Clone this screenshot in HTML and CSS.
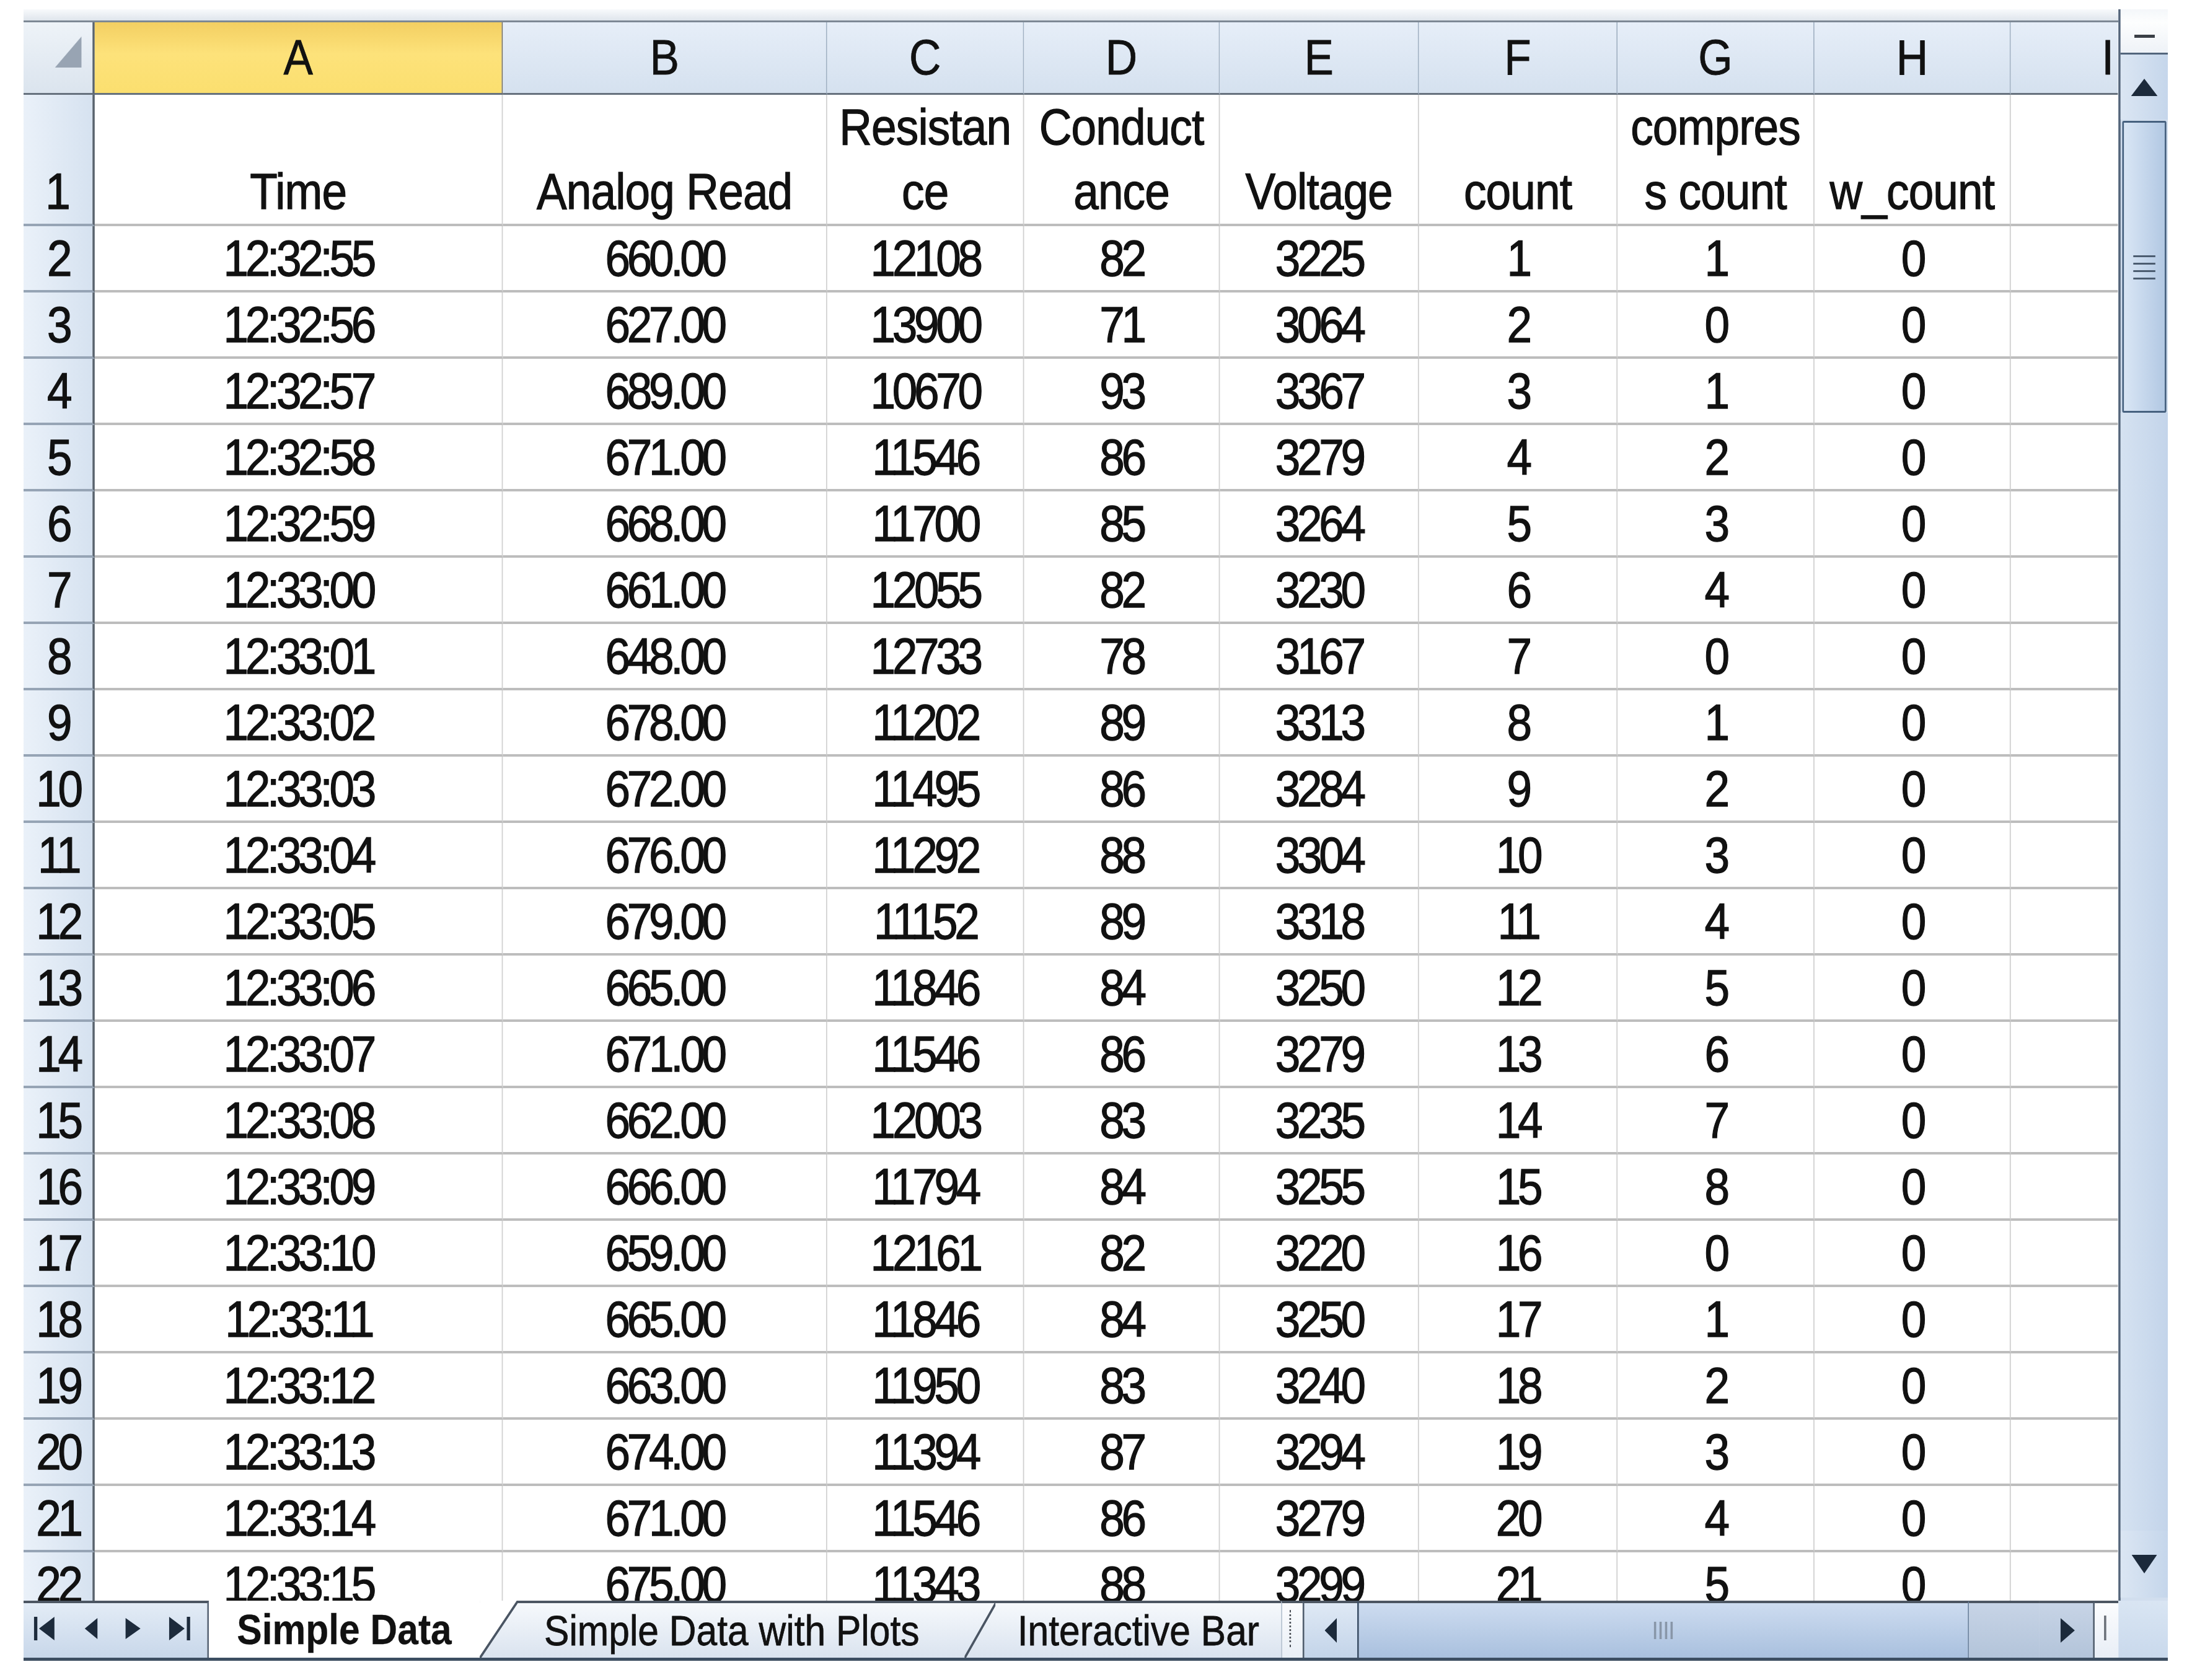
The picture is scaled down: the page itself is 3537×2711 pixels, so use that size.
FILE: index.html
```html
<!DOCTYPE html>
<html lang="en">
<head>
    <meta charset="UTF-8">
    <meta name="viewport" content="width=device-width, initial-scale=1.0">
    <title>Simple Data</title>
    <link rel="stylesheet" href="styles.css">
</head>
<body>
  <div class="frame">
    <div class="window">
        <div class="main">
            <div class="sheet">
                <div class="topstrip"></div>
                <div class="grid-wrap">
                    <table class="grid">
                        <colgroup>
                            <col class="c-row"><col class="c-a"><col class="c-b"><col class="c-c"><col class="c-d">
                            <col class="c-e"><col class="c-f"><col class="c-g"><col class="c-h"><col class="c-i">
                        </colgroup>
                        <thead>
                            <tr class="colhead">
                                <th class="corner"><span class="tri"></span></th>
                                <th class="sel">A</th><th>B</th><th>C</th><th>D</th><th>E</th>
                                <th>F</th><th>G</th><th>H</th><th class="cut">I</th>
                            </tr>
                        </thead>
                        <tbody>
                            <tr class="r-title">
                                <th>1</th><td>Time</td><td>Analog Read</td><td>Resistan<br>ce</td><td>Conduct<br>ance</td>
                                <td>Voltage</td><td>count</td><td>compres<br>s count</td><td>w_count</td><td></td>
                            </tr>
                            <tr><th>2</th><td>12:32:55</td><td>660.00</td><td>12108</td><td>82</td><td>3225</td><td>1</td><td>1</td><td>0</td><td></td></tr>
                            <tr><th>3</th><td>12:32:56</td><td>627.00</td><td>13900</td><td>71</td><td>3064</td><td>2</td><td>0</td><td>0</td><td></td></tr>
                            <tr><th>4</th><td>12:32:57</td><td>689.00</td><td>10670</td><td>93</td><td>3367</td><td>3</td><td>1</td><td>0</td><td></td></tr>
                            <tr><th>5</th><td>12:32:58</td><td>671.00</td><td>11546</td><td>86</td><td>3279</td><td>4</td><td>2</td><td>0</td><td></td></tr>
                            <tr><th>6</th><td>12:32:59</td><td>668.00</td><td>11700</td><td>85</td><td>3264</td><td>5</td><td>3</td><td>0</td><td></td></tr>
                            <tr><th>7</th><td>12:33:00</td><td>661.00</td><td>12055</td><td>82</td><td>3230</td><td>6</td><td>4</td><td>0</td><td></td></tr>
                            <tr><th>8</th><td>12:33:01</td><td>648.00</td><td>12733</td><td>78</td><td>3167</td><td>7</td><td>0</td><td>0</td><td></td></tr>
                            <tr><th>9</th><td>12:33:02</td><td>678.00</td><td>11202</td><td>89</td><td>3313</td><td>8</td><td>1</td><td>0</td><td></td></tr>
                            <tr><th>10</th><td>12:33:03</td><td>672.00</td><td>11495</td><td>86</td><td>3284</td><td>9</td><td>2</td><td>0</td><td></td></tr>
                            <tr><th>11</th><td>12:33:04</td><td>676.00</td><td>11292</td><td>88</td><td>3304</td><td>10</td><td>3</td><td>0</td><td></td></tr>
                            <tr><th>12</th><td>12:33:05</td><td>679.00</td><td>11152</td><td>89</td><td>3318</td><td>11</td><td>4</td><td>0</td><td></td></tr>
                            <tr><th>13</th><td>12:33:06</td><td>665.00</td><td>11846</td><td>84</td><td>3250</td><td>12</td><td>5</td><td>0</td><td></td></tr>
                            <tr><th>14</th><td>12:33:07</td><td>671.00</td><td>11546</td><td>86</td><td>3279</td><td>13</td><td>6</td><td>0</td><td></td></tr>
                            <tr><th>15</th><td>12:33:08</td><td>662.00</td><td>12003</td><td>83</td><td>3235</td><td>14</td><td>7</td><td>0</td><td></td></tr>
                            <tr><th>16</th><td>12:33:09</td><td>666.00</td><td>11794</td><td>84</td><td>3255</td><td>15</td><td>8</td><td>0</td><td></td></tr>
                            <tr><th>17</th><td>12:33:10</td><td>659.00</td><td>12161</td><td>82</td><td>3220</td><td>16</td><td>0</td><td>0</td><td></td></tr>
                            <tr><th>18</th><td>12:33:11</td><td>665.00</td><td>11846</td><td>84</td><td>3250</td><td>17</td><td>1</td><td>0</td><td></td></tr>
                            <tr><th>19</th><td>12:33:12</td><td>663.00</td><td>11950</td><td>83</td><td>3240</td><td>18</td><td>2</td><td>0</td><td></td></tr>
                            <tr><th>20</th><td>12:33:13</td><td>674.00</td><td>11394</td><td>87</td><td>3294</td><td>19</td><td>3</td><td>0</td><td></td></tr>
                            <tr><th>21</th><td>12:33:14</td><td>671.00</td><td>11546</td><td>86</td><td>3279</td><td>20</td><td>4</td><td>0</td><td></td></tr>
                            <tr><th>22</th><td>12:33:15</td><td>675.00</td><td>11343</td><td>88</td><td>3299</td><td>21</td><td>5</td><td>0</td><td></td></tr>
                        </tbody>
                    </table>
                </div>
            </div>
            <div class="vscroll">
                <div class="vs-split"><span class="dash"></span></div>
                <div class="vs-btn vs-up">
                    <svg width="48" height="28" viewBox="0 0 48 28"><polygon points="24,0 48,28 0,28"/></svg>
                </div>
                <div class="vs-thumb">
                    <span class="grip"></span><span class="grip"></span><span class="grip"></span><span class="grip"></span>
                </div>
                <div class="vs-track"></div>
                <div class="vs-btn vs-down">
                    <svg width="46" height="30" viewBox="0 0 46 30"><polygon points="0,0 46,0 23,30"/></svg>
                </div>
            </div>
        </div>
        <div class="bottombar">
            <div class="nav">
                <svg width="336" height="88" viewBox="0 0 336 88">
                    <rect x="19" y="22" width="6" height="38"/>
                    <polygon points="56,22 28,41 56,60"/>
                    <polygon points="134,24 111,41 134,58"/>
                    <polygon points="185,24 212,41 185,58"/>
                    <polygon points="264,22 292,41 264,60"/>
                    <rect x="296" y="22" width="6" height="38"/>
                </svg>
            </div>
            <div class="tabs">
                <div class="tab active">Simple Data</div>
                <div class="tab t2">Simple Data with Plots</div>
                <div class="tab t3">Interactive Bar</div>
            </div>
            <div class="split-h"><span class="dots"></span></div>
            <div class="hs-btn hs-left">
                <svg width="22" height="40" viewBox="0 0 22 40"><polygon points="22,0 0,20 22,40"/></svg>
            </div>
            <div class="hs-thumb">
                <span class="hgrip"></span><span class="hgrip"></span><span class="hgrip"></span><span class="hgrip"></span>
            </div>
            <div class="hs-track"></div>
            <div class="hs-btn hs-right">
                <svg width="26" height="40" viewBox="0 0 26 40"><polygon points="0,0 26,20 0,40"/></svg>
            </div>
            <div class="split-h2"><span class="bar"></span></div>
            <div class="corner-box"></div>
        </div>
    </div>
  </div>
</body>
</html>
```

FILE: styles.css
```css
body {
    margin: 0;
    background-color: #fff;
    overflow: hidden;
    font-family: "Liberation Sans", Arial, sans-serif;
    color: #111;
}
.frame {
    width: 3460px;
    height: 2665px;
    margin: 15px 0 0 38px;
    overflow: hidden;
}
/* the screenshot is squeezed sideways, so the whole window is too */
.window {
    width: 3888px;
    transform: scaleX(0.89);
    transform-origin: 0 0;
}
.main {
    display: flex;
    height: 2568px;
}
.sheet {
    flex: 1;
    min-width: 0;
    display: flex;
    flex-direction: column;
}
.topstrip {
    height: 18px;
    background: linear-gradient(#f8fafc, #dfe5ec);
    border-bottom: 3px solid #7d8894;
}
.grid-wrap {
    flex: 1;
    overflow: hidden;
    background-color: #fff;
}
.grid {
    border-collapse: separate;
    border-spacing: 0;
    table-layout: fixed;
    width: 3797px;
    font-size: 82px;
}
.c-row { width: 129px; }
.c-a { width: 740px; }
.c-b { width: 588px; }
.c-c { width: 357px; }
.c-d { width: 355px; }
.c-e { width: 361px; }
.c-f { width: 360px; }
.c-g { width: 357px; }
.c-h { width: 356px; }
.c-i { width: 194px; }

.colhead {
    height: 106px;
}
.colhead th {
    padding: 0;
    font-weight: normal;
    font-size: 80px;
    background: linear-gradient(#e6eef8, #d5e1ef);
    border-right: 2px solid #9eafc2;
    border-bottom: 3px solid #66717d;
    -webkit-text-stroke: 0.8px #111;
}
.colhead th.sel {
    background: linear-gradient(#f3cf62, #fde27a 45%, #fbdf6f);
    border-right-color: #6f6a5e;
}
.colhead th.cut {
    text-align: right;
    padding-right: 7px;
    border-right: none;
}
.colhead th.corner {
    text-align: right;
    vertical-align: bottom;
    padding: 0 20px 22px 0;
    border-right: 4px solid #59636e;
    background: linear-gradient(#eef3f8, #dbe4ee);
}
.tri {
    display: inline-block;
    width: 48px;
    height: 50px;
    background: linear-gradient(to bottom right, transparent 49%, #98a4b3 51%);
}

tbody tr {
    height: 107px;
}
tbody td {
    padding: 0;
    text-align: center;
    vertical-align: middle;
    white-space: nowrap;
    line-height: 1;
    letter-spacing: -6px;
    border-right: 2px solid #d0d0d0;
    border-bottom: 4px solid #bdbdbd;
    -webkit-text-stroke: 1.3px #111;
}
tbody td:last-child {
    border-right: none;
}
tbody th {
    padding: 0;
    font-weight: normal;
    letter-spacing: -6px;
    background: linear-gradient(to right, #eaf1f9, #d6e2f0);
    border-right: 4px solid #59636e;
    border-bottom: 4px solid #96a4b5;
    -webkit-text-stroke: 1.3px #111;
}
tbody .r-title {
    height: 212px;
}
.r-title td,
.r-title th {
    vertical-align: bottom;
    line-height: 104px;
    letter-spacing: 0;
}
.r-title td {
    letter-spacing: -1px;
}

/* vertical scroll bar */
.vscroll {
    width: 90px;
    box-sizing: border-box;
    display: flex;
    flex-direction: column;
    background-color: #d1deee;
    border-left: 4px solid #55657a;
}
.vs-split {
    height: 70px;
    background: linear-gradient(#f4f7fa, #fdfefe 30%, #eef2f7);
    border-bottom: 3px solid #52657c;
}
.vs-split .dash {
    display: block;
    width: 37px;
    height: 5px;
    margin: 41px auto 0;
    background-color: #3a3f46;
}
.vs-btn {
    display: flex;
    align-items: center;
    justify-content: center;
    background: linear-gradient(to right, #dbe6f3, #c5d6eb);
}
.vs-btn svg {
    fill: #1c2a3b;
}
.vs-up {
    height: 105px;
}
.vs-down {
    height: 108px;
    margin-bottom: 5px;
}
.vs-thumb {
    height: 471px;
    margin: 2px 3px 0;
    border: 3px solid #46617f;
    border-radius: 3px;
    background: linear-gradient(to right, #d9e6f5, #b2c8e3);
    display: flex;
    flex-direction: column;
    align-items: center;
    padding-top: 214px;
    box-sizing: border-box;
}
.vs-thumb .grip {
    display: block;
    width: 40px;
    height: 3px;
    margin-bottom: 9px;
    background-color: #4b5c70;
}
.vs-track {
    flex: 1;
    background: linear-gradient(to right, #d5e2f1, #c3d4ea);
}

/* sheet tabs and horizontal scroll bar */
.bottombar {
    display: flex;
    height: 97px;
    box-sizing: border-box;
    border-bottom: 5px solid #3d4e62;
}
.nav,
.tabs,
.split-h,
.hs-btn,
.hs-thumb,
.hs-track,
.split-h2 {
    border-top: 4px solid #4c5662;
}
.nav {
    width: 336px;
    box-sizing: border-box;
    background: linear-gradient(#e3ecf6, #c8d7ea);
    border-right: 3px solid #5a6778;
}
.nav svg {
    display: block;
    fill: #1d2b3c;
}
.tabs {
    width: 1944px;
    display: flex;
    font-size: 68px;
    background: linear-gradient(#f6f9fc, #dae3ef);
}
.tab {
    display: flex;
    align-items: center;
    box-sizing: border-box;
    white-space: nowrap;
    -webkit-text-stroke: 0.8px #111;
}
.tab.active {
    width: 560px;
    margin-top: -4px;
    padding-right: 69px;
    justify-content: center;
    font-weight: bold;
    -webkit-text-stroke: 0.3px #111;
    background:
        linear-gradient(to top left, transparent calc(50% - 3px), #4a5563 calc(50% - 2px), #4a5563 calc(50% + 1px), #fff calc(50% + 2px)) right top / 69px 100% no-repeat,
        linear-gradient(#fff, #fff) left top / calc(100% - 69px) 100% no-repeat;
}
.tab.t2 {
    width: 866px;
    padding-right: 90px;
    justify-content: center;
    background: linear-gradient(to top left, transparent calc(50% - 3px), #4a5563 calc(50% - 2px), #4a5563 calc(50% + 1px), transparent calc(50% + 2px)) right top / 56px 100% no-repeat;
}
.tab.t3 {
    flex: 1;
    padding-left: 40px;
    overflow: hidden;
}
.split-h {
    width: 39px;
    box-sizing: border-box;
    background: linear-gradient(#fbfcfe, #e9eff6);
    border-left: 2px solid #b7c3d1;
}
.split-h .dots {
    display: block;
    width: 0;
    height: 60px;
    margin: 11px 0 0 13px;
    border-left: 3px dotted #4c5159;
}
.hs-btn {
    display: flex;
    align-items: center;
    justify-content: center;
    box-sizing: border-box;
}
.hs-btn svg {
    fill: #1c2a3b;
}
.hs-left {
    width: 99px;
    border-left: 3px solid #4f5d6e;
    background: linear-gradient(#dfe9f5, #c3d4e9);
}
.hs-thumb {
    width: 1109px;
    box-sizing: border-box;
    display: flex;
    align-items: center;
    justify-content: center;
    gap: 6px;
    border-left: 3px solid #3b4f68;
    border-right: 2px solid #6d84a0;
    background: linear-gradient(#cddcf0, #a9c0de);
}
.hs-thumb .hgrip {
    display: block;
    width: 4px;
    height: 28px;
    background-color: #8896a8;
}
.hs-track {
    flex: 1;
    background: linear-gradient(#c7d4e6, #b3c4da);
}
.hs-right {
    width: 101px;
    justify-content: flex-start;
    padding-left: 39px;
    border-right: 3px solid #4f5d6e;
    background: linear-gradient(#c7d4e6, #b3c4da);
}
.split-h2 {
    width: 43px;
    box-sizing: border-box;
    background: linear-gradient(#fbfcfe, #e8eef6);
}
.split-h2 .bar {
    display: block;
    width: 4px;
    height: 40px;
    margin: 20px 0 0 17px;
    background-color: #6b717a;
}
.corner-box {
    width: 90px;
    background: linear-gradient(#d9e5f3, #c9d9ec);
}
```
